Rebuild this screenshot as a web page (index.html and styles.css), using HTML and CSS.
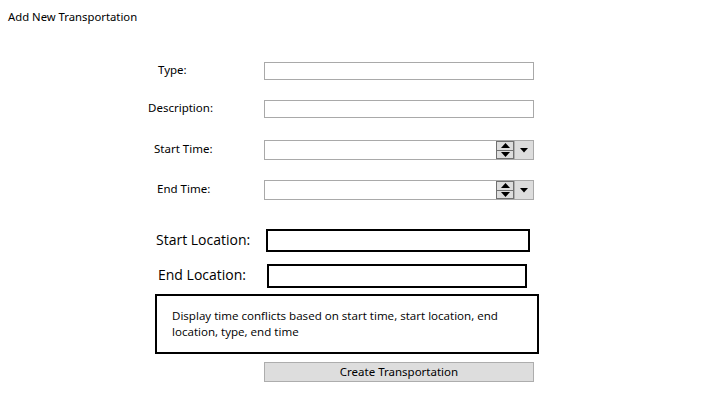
FILE: index.html
```html
<!DOCTYPE html>
<html>
<head>
<meta charset="utf-8">
<link rel="stylesheet" href="styles.css">
</head>
<body>
<div class="page">
  <div class="title">Add New Transportation</div>
  <div class="form">
    <div class="row row-type">
      <div class="label lbl-type">Type:</div>
      <div class="textbox"></div>
    </div>
    <div class="row row-desc">
      <div class="label lbl-desc">Description:</div>
      <div class="textbox"></div>
    </div>
    <div class="row row-start">
      <div class="label lbl-start">Start Time:</div>
      <div class="timebox">
        <div class="time-field"></div>
        <div class="spin">
          <div class="spin-half"><svg width="9" height="5" viewBox="0 0 9 5"><path d="M0 5 L4.5 0 L9 5 Z" fill="#000"/></svg></div>
          <div class="spin-half spin-down"><svg width="9" height="5" viewBox="0 0 9 5"><path d="M0 0 L4.5 5 L9 0 Z" fill="#000"/></svg></div>
        </div>
        <div class="drop"><svg width="8" height="5" viewBox="0 0 8 5"><path d="M0 0 L4 4.5 L8 0 Z" fill="#000"/></svg></div>
      </div>
    </div>
    <div class="row row-end">
      <div class="label lbl-end">End Time:</div>
      <div class="timebox">
        <div class="time-field"></div>
        <div class="spin">
          <div class="spin-half"><svg width="9" height="5" viewBox="0 0 9 5"><path d="M0 5 L4.5 0 L9 5 Z" fill="#000"/></svg></div>
          <div class="spin-half spin-down"><svg width="9" height="5" viewBox="0 0 9 5"><path d="M0 0 L4.5 5 L9 0 Z" fill="#000"/></svg></div>
        </div>
        <div class="drop"><svg width="8" height="5" viewBox="0 0 8 5"><path d="M0 0 L4 4.5 L8 0 Z" fill="#000"/></svg></div>
      </div>
    </div>
    <div class="row row-sloc">
      <div class="big-label lbl-sloc">Start Location:</div>
      <div class="loc-box loc-start"></div>
    </div>
    <div class="row row-eloc">
      <div class="big-label lbl-eloc">End Location:</div>
      <div class="loc-box loc-end"></div>
    </div>
    <div class="conflicts">Display time conflicts based on start time, start location, end location, type, end time</div>
    <div class="btn-row">
      <div class="button">Create Transportation</div>
    </div>
  </div>
</div>
</body>
</html>
```
FILE: styles.css
```css
html, body {
  margin: 0;
  padding: 0;
  background: #fff;
}
.page {
  width: 718px;
  height: 414px;
  font-family: "Noto Sans", "Open Sans", sans-serif;
  color: #000;
}
.title {
  padding: 9px 0 0 8px;
  font-size: 11.3px;
  line-height: 16px;
  height: 17px;
}
.form {
  display: flex;
  flex-direction: column;
  padding-left: 140px;
}
.row {
  display: flex;
  align-items: center;
}
.row-type { margin-top: 36px; }
.row-desc { margin-top: 20px; }
.row-start { margin-top: 22px; }
.row-end { margin-top: 20px; }
.row-sloc { margin-top: 29px; }
.row-eloc { margin-top: 12px; }
.label {
  width: 124px;
  box-sizing: border-box;
  font-size: 11.5px;
  line-height: 13px;
  padding-bottom: 3px;
}
.lbl-type { padding-left: 18px; }
.lbl-desc { padding-left: 8px; }
.lbl-start { padding-left: 14px; }
.lbl-end { padding-left: 17px; }
.textbox {
  width: 270px;
  height: 18px;
  box-sizing: border-box;
  border: 1px solid #a9a9a9;
  background: #fff;
}
.timebox {
  width: 270px;
  height: 20px;
  box-sizing: border-box;
  border: 1px solid #a9a9a9;
  display: flex;
  background: #fff;
}
.time-field {
  flex: 1;
}
.spin {
  width: 18px;
  box-sizing: border-box;
  border: 1px solid #707070;
  background: #dddddd;
  display: flex;
  flex-direction: column;
}
.spin-half {
  flex: 1;
  display: flex;
  align-items: center;
  justify-content: center;
}
.spin-down {
  border-top: 1px solid #707070;
}
.drop {
  width: 18px;
  background: #dddddd;
  border-left: 1px solid #b0b0b0;
  display: flex;
  align-items: center;
  justify-content: center;
}
.big-label {
  font-family: "Open Sans", "Noto Sans", sans-serif;
  font-size: 14px;
  line-height: 20px;
  box-sizing: border-box;
  padding-bottom: 2px;
}
.lbl-sloc { width: 126px; padding-left: 16px; }
.lbl-eloc { width: 127px; padding-left: 18px; }
.loc-box {
  box-sizing: border-box;
  border: 2px solid #000;
  background: #fff;
}
.loc-start { width: 264px; height: 23px; }
.loc-end { width: 260px; height: 24px; }
.conflicts {
  margin: 6px 0 0 15px;
  width: 384px;
  height: 60px;
  box-sizing: border-box;
  border: 2px solid #000;
  padding: 12px 14px 0 15px;
  font-family: "Open Sans", "Noto Sans", sans-serif;
  font-size: 11.6px;
  line-height: 16px;
}
.btn-row {
  display: flex;
  padding-left: 124px;
  margin-top: 8px;
}
.button {
  width: 270px;
  height: 20px;
  box-sizing: border-box;
  border: 1px solid #adadad;
  background: #dddddd;
  font-size: 11.5px;
  line-height: 18px;
  text-align: center;
}
```
